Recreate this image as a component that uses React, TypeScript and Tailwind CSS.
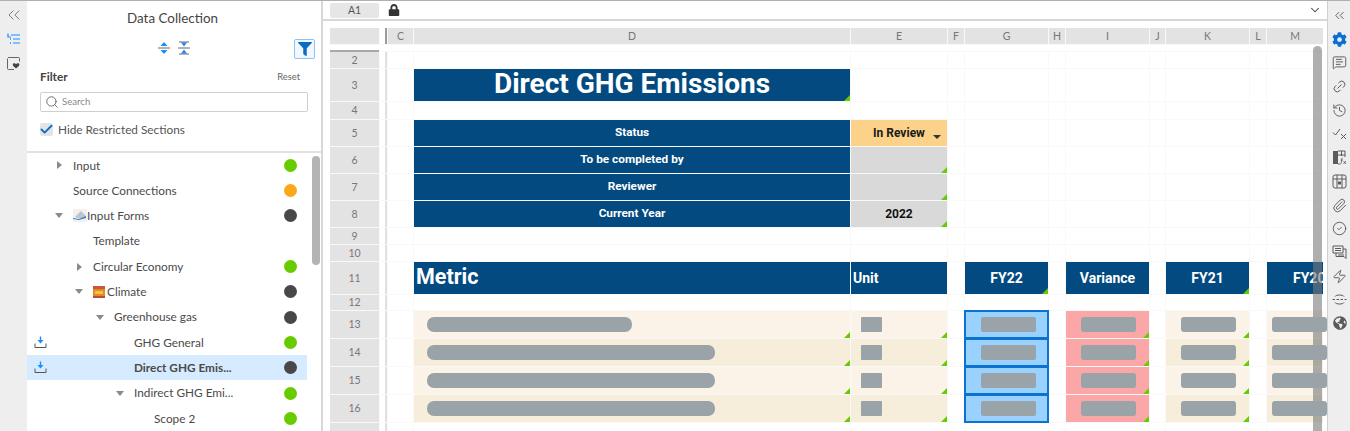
import { ChevronDown, ChevronsLeft, History, Link2, MessageSquareText, Paperclip, CircleCheck, Zap, Search, Check } from "lucide-react";
import { FaCog, FaFilter, FaGlobeAmericas, FaLock } from "react-icons/fa";

type Node = { label: string; level: number; caret?: "open" | "closed"; dot?: string; emoji?: "mail" | "fire"; upload?: boolean; active?: boolean };

const GREEN = "bg-[#66cc00]";
const ORANGE = "bg-[#faa81a]";
const DARK = "bg-[#484848]";

const tree: Node[] = [
    { label: "Input", level: 0, caret: "closed", dot: GREEN },
    { label: "Source Connections", level: 0, dot: ORANGE },
    { label: "Input Forms", level: 0, caret: "open", dot: DARK, emoji: "mail" },
    { label: "Template", level: 1 },
    { label: "Circular Economy", level: 1, caret: "closed", dot: GREEN },
    { label: "Climate", level: 1, caret: "open", dot: DARK, emoji: "fire" },
    { label: "Greenhouse gas", level: 2, caret: "open", dot: DARK },
    { label: "GHG General", level: 3, dot: GREEN, upload: true },
    { label: "Direct GHG Emis...", level: 3, dot: DARK, upload: true, active: true },
    { label: "Indirect GHG Emi...", level: 3, caret: "open", dot: GREEN },
    { label: "Scope 2", level: 4, dot: GREEN },
];

const indents = ["ml-0", "ml-[20px]", "ml-[41px]", "ml-[61px]", "ml-[81px]"];

function UploadIcon() {
    return (
        <svg width="13" height="13" viewBox="0 0 13 13" fill="none">
            <path d="M1 7.5v4h11v-4" stroke="#555" strokeWidth="1" />
            <path d="M6.5 0.5v4" stroke="#1a8cff" strokeWidth="1.4" />
            <path d="M3.5 4h6l-3 3.5z" fill="#1a8cff" />
        </svg>
    );
}

function MailEmoji() {
    return (
        <svg width="14" height="13" viewBox="0 0 14 13" className="shrink-0">
            <rect x="0" y="0" width="14" height="13" fill="#f0f0f0" />
            <path d="M2 8l6-6 5 5-5 3z" fill="#bcc4cc" />
            <path d="M0 9l6 1 7-3v2l-7 2-6-1z" fill="#3a87c4" />
        </svg>
    );
}

function FireEmoji() {
    return (
        <svg width="12" height="12" viewBox="0 0 12 12" className="mr-[2px] shrink-0">
            <rect width="12" height="12" fill="#e08a30" />
            <rect y="0" width="12" height="3" fill="#c8553f" />
            <rect x="2" y="5" width="8" height="3" fill="#f7c331" />
            <rect y="10" width="12" height="2" fill="#c14b3a" />
        </svg>
    );
}

function TreeRow({ node }: { node: Node }) {
    return (
        <div className={`flex h-[25.3px] w-[280px] items-center text-[11.8px] text-[#4a4a4a] ${node.active ? "bg-[#d6ebff] font-bold" : ""}`}>
            <div className="flex w-[25px] shrink-0 pl-[7px]">{node.upload && <UploadIcon />}</div>
            <div className={`flex w-[21px] shrink-0 items-center pl-[3px] ${indents[node.level]}`}>
                {node.caret === "closed" && <div className="ml-[2px] h-0 w-0 border-y-[4px] border-l-[5px] border-y-transparent border-l-[#8a8a8a]" />}
                {node.caret === "open" && <div className="h-0 w-0 border-x-[4.5px] border-t-[5px] border-x-transparent border-t-[#8a8a8a]" />}
            </div>
            {node.emoji === "mail" && <MailEmoji />}
            {node.emoji === "fire" && <FireEmoji />}
            <span className="whitespace-nowrap">{node.label}</span>
            {node.dot && <div className={`ml-auto mr-[10px] h-[13px] w-[13px] shrink-0 rounded-full ${node.dot}`} />}
        </div>
    );
}

function LeftRail() {
    return (
        <div className="flex w-[27px] shrink-0 flex-col items-center bg-[#eeeeee] pt-[4px] text-[#666]">
            <ChevronsLeft size={20} strokeWidth={1} />
            <svg width="14" height="12" viewBox="0 0 14 12" fill="none" className="mt-[8px]" stroke="#1a8cff" strokeWidth="1.2">
                <path d="M1 0.5v3.5h3" />
                <path d="M4 2h9M6 6h7M6 10h7" />
                <path d="M3 6h1M3 10h1" strokeWidth="1.6" />
            </svg>
            <svg width="13" height="13" viewBox="0 0 13 13" fill="none" className="mt-[12px]">
                <path d="M1 0.500h10.500a1 1 0 0 1 1 1v3M7 12.500H1.500a1 1 0 0 1-1-1V1.500" stroke="#666" strokeWidth="1" />
                <path d="M9 11.500C7 10 5.800 9 5.800 7.600c0-1.500 2.400-1.900 3.200-.4.800-1.500 3.400-1.100 3.400.4 0 1.400-1.400 2.400-3.400 3.900z" fill="#444" />
            </svg>
        </div>
    );
}

function LeftPanel() {
    return (
        <div className="relative flex w-[296px] shrink-0 flex-col overflow-hidden border-r-2 border-[#d8d8d8] bg-white font-['Lato',sans-serif]">
            <div className="pt-[8px] pr-[3px] text-center text-[13.4px] leading-[18px] text-[#444]">Data Collection</div>
            <div className="flex h-[33px] items-center pl-[130px] pt-[9px]">
                <svg width="14" height="14" viewBox="0 0 14 14">
                    <path d="M7 1l3.500 4h-7zM7 13l-3.500-4h7z" fill="#1a8cff" />
                    <path d="M1 7h12" stroke="#666" strokeWidth="1" />
                </svg>
                <svg width="14" height="14" viewBox="0 0 14 14" className="ml-[6px]">
                    <path d="M7 5.500l-3-4h6zM7 8.500l3 4h-6z" fill="#1a8cff" />
                    <path d="M1 7h12M2 1h10M2 13h10" stroke="#666" strokeWidth="1" />
                </svg>
                <div className="ml-auto mr-[6px] mt-[3px] flex h-[20px] w-[21px] items-center justify-center rounded-[2px] border border-[#8cc4f5] bg-[#f2f8fe]">
                    <FaFilter className="text-[#0a6fc2]" size={14} />
                </div>
            </div>
            <div className="mt-[10px] flex items-center justify-between pl-[13px] pr-[21px]">
                <span className="text-[11.8px] font-bold leading-[16px] text-[#444]">Filter</span>
                <span className="text-[9.4px] leading-[16px] text-[#666]">Reset</span>
            </div>
            <div className="ml-[13px] mt-[7px] flex h-[20px] w-[268px] items-center rounded-[2px] border border-[#cfcfcf] pl-[4px]">
                <Search size={14} strokeWidth={1.4} className="text-[#555]" />
                <span className="ml-[3px] text-[9.6px] text-[#888]">Search</span>
            </div>
            <div className="ml-[13px] mt-[10px] flex items-center">
                <div className="flex h-[13px] w-[13px] items-center justify-center rounded-[2px] bg-[#e4e4e4]">
                    <Check size={15} strokeWidth={3} className="shrink-0 text-[#0a6fd0]" />
                </div>
                <span className="ml-[5px] text-[11.8px] leading-[16px] text-[#555]">Hide Restricted Sections</span>
            </div>
            <div className="mt-[13px] border-t-2 border-[#e2e2e2]">
                {tree.map((node) => (
                    <TreeRow key={node.label} node={node} />
                ))}
            </div>
            <div className="absolute right-[1px] top-[155px] h-[109px] w-[8px] rounded-full bg-[#b4b4b4]" />
        </div>
    );
}

function Corner() {
    return <div className="absolute bottom-0 right-0 h-0 w-0 border-b-[6px] border-l-[6px] border-b-[#66cc00] border-l-transparent" />;
}

const columns = ["C", "D", "E", "F", "G", "H", "I", "J", "K", "L", "M"];
const rows = [
    { n: 2, h: "h-[16px]" },
    { n: 3, h: "h-[32px]" },
    { n: 4, h: "h-[17px]" },
    { n: 5, h: "h-[26px]" },
    { n: 6, h: "h-[26px]" },
    { n: 7, h: "h-[26px]" },
    { n: 8, h: "h-[26px]" },
    { n: 9, h: "h-[16px]" },
    { n: 10, h: "h-[16px]" },
    { n: 11, h: "h-[32px]" },
    { n: 12, h: "h-[15px]" },
    { n: 13, h: "h-[27px]" },
    { n: 14, h: "h-[27px]" },
    { n: 15, h: "h-[27px]" },
    { n: 16, h: "h-[27px]" },
    { n: 17, h: "h-[27px]" },
];

const BLUE = "bg-[#024a80] text-white";
const CREAM = ["bg-[#fbf3e8]", "bg-[#f6eeda]"];

function Pill({ w, ml, round }: { w: string; ml: string; round: string }) {
    return <div className={`relative z-20 h-[15px] shrink-0 bg-[#99a3a8] ${w} ${ml} ${round}`} />;
}

function renderCell(row: number, col: string) {
    const key = `${row}${col}`;
    const base = "relative flex items-center leading-none";
    const band = row % 2 === 1 ? CREAM[0] : CREAM[1];

    if (row === 3 && col === "D") {
        return <div key={key} className={`${base} justify-center pb-[3px] text-[28px] font-bold ${BLUE}`}>Direct GHG Emissions<Corner /></div>;
    }
    if (row >= 5 && row <= 8 && col === "D") {
        const label = ["Status", "To be completed by", "Reviewer", "Current Year"][row - 5];
        return <div key={key} className={`${base} justify-center text-[11.8px] font-bold ${BLUE}`}>{label}</div>;
    }
    if (row === 5 && col === "E") {
        return (
            <div key={key} className={`${base} justify-center bg-[#fcd28a] text-[12px] font-bold text-[#1a1a1a]`}>
                In Review
                <div className="absolute bottom-[7px] right-[6px] h-0 w-0 border-x-[4px] border-t-[4px] border-x-transparent border-t-[#333]" />
            </div>
        );
    }
    if (row >= 6 && row <= 8 && col === "E") {
        return <div key={key} className={`${base} justify-center bg-[#d9d9d9] text-[12px] font-bold text-[#111]`}>{row === 8 && "2022"}<Corner /></div>;
    }
    if (row === 11) {
        if (col === "D") return <div key={key} className={`${base} pl-[2px] pb-[2px] text-[21.5px] font-bold ${BLUE}`}>Metric</div>;
        if (col === "E") return <div key={key} className={`${base} pl-[2px] pb-[1px] text-[14px] font-bold ${BLUE}`}>Unit</div>;
        if (col === "G") return <div key={key} className={`${base} justify-center pb-[1px] text-[14px] font-bold ${BLUE}`}>FY22<Corner /></div>;
        if (col === "I") return <div key={key} className={`${base} justify-center pb-[1px] text-[14px] font-bold ${BLUE}`}>Variance</div>;
        if (col === "K") return <div key={key} className={`${base} justify-center pb-[1px] text-[14px] font-bold ${BLUE}`}>FY21<Corner /></div>;
        if (col === "M") return <div key={key} className={`${base} overflow-hidden whitespace-nowrap pb-[1px] pl-[26px] text-[14px] font-bold ${BLUE}`}>FY20</div>;
    }
    if (row >= 13 && row <= 16) {
        if (col === "D") return <div key={key} className={`${base} ${band}`}><Pill ml="ml-[13px]" round="rounded-[7px]" w={row === 13 ? "w-[205px]" : "w-[288px]"} /><Corner /></div>;
        if (col === "E") return <div key={key} className={`${base} ${band}`}><Pill ml="ml-[10px]" round="rounded-[1px]" w="w-[21px]" /><Corner /></div>;
        if (col === "G") return <div key={key} className={`${base} z-10 bg-[#99d1ff] outline-2 -outline-offset-1 outline-[#0b72d2]`}><Pill ml="ml-[16px]" round="rounded-[2px]" w="w-[55px]" /></div>;
        if (col === "I") return <div key={key} className={`${base} bg-[#fba7a7]`}><Pill ml="ml-[15px]" round="rounded-[3px]" w="w-[55px]" /><Corner /></div>;
        if (col === "K") return <div key={key} className={`${base} ${band}`}><Pill ml="ml-[15px]" round="rounded-[3px]" w="w-[55px]" /><Corner /></div>;
        if (col === "M") return <div key={key} className={`${base} ${band}`}><Pill ml="ml-[5px]" round="rounded-[3px]" w="w-[55px]" /></div>;
    }
    return <div key={key} className="bg-white" />;
}

function Sheet() {
    return (
        <div className="ml-[7px] mt-[7px] grid w-max grid-cols-[49px_7px_25px_436px_96px_16px_83px_16px_83px_15px_83px_16px_56px] gap-px bg-[#f9f9f9] font-['Roboto',sans-serif]">
            <div className="h-[16px] bg-[#e3e3e3]" />
            <div className="border-r-2 border-[#9a9a9a] bg-white" />
            {columns.map((c) => (
                <div key={c} className="flex items-center justify-center bg-[#e3e3e3] font-['Lato',sans-serif] text-[10.5px] leading-none text-[#777]">{c}</div>
            ))}
            <div className="col-span-full h-[6px] bg-white">
                <div className="mt-[5px] h-[2px] w-[49px] bg-[#a8a8a8]" />
            </div>
            {rows.map(({ n, h }) => (
                <div key={n} className="contents">
                    <div className={`flex items-center justify-center bg-[#e3e3e3] font-['Lato',sans-serif] text-[10.5px] leading-none text-[#777] ${h}`}>{n}</div>
                    <div className="border-r-2 border-[#e0e0e0] bg-white" />
                    {columns.map((c) => renderCell(n, c))}
                </div>
            ))}
        </div>
    );
}

function RightRail() {
    const cls = "text-[#5a5a5a]";
    return (
        <div className="flex w-[24px] shrink-0 flex-col items-center gap-[8.7px] border-l border-[#d0d0d0] bg-[#eeeeee] pt-[7px]">
            <ChevronsLeft size={15} strokeWidth={1.5} className={cls} />
            <FaCog size={15} className="text-[#0a6fd0]" />
            <MessageSquareText size={15} strokeWidth={1.5} className={cls} />
            <Link2 size={15} strokeWidth={1.5} className={`${cls} -rotate-45`} />
            <History size={15} strokeWidth={1.5} className={cls} />
            <svg width="15" height="15" viewBox="0 0 15 15" fill="none" stroke="#5a5a5a" strokeWidth="1">
                <path d="M1 6.500l2.500 2.500L8 3" />
                <path d="M9 8l5 5M14 8l-5 5" />
            </svg>
            <svg width="15" height="15" viewBox="0 0 15 15" fill="none">
                <path d="M1 1h5v13H1z" fill="#5a5a5a" />
                <path d="M6 1h7v6M6 5h7M9.500 1v5M6 14h2" stroke="#5a5a5a" strokeWidth="1" />
                <path d="M10.500 8c-1 0-.8 1-1 3s-.2 3-1.200 3M8.500 10h2.500M11.500 11l2.500 3M14 11l-2.500 3" stroke="#5a5a5a" strokeWidth=".8" />
            </svg>
            <svg width="15" height="15" viewBox="0 0 15 15" fill="none" stroke="#5a5a5a" strokeWidth="1">
                <rect x="1" y="1" width="13" height="13" rx="2" />
                <path d="M1 5h13M5 1v4M10 1v4M5 5v9M10 5v9" />
                <rect x="6.500" y="8" width="2" height="2" fill="#5a5a5a" />
            </svg>
            <Paperclip size={15} strokeWidth={1.5} className={cls} />
            <CircleCheck size={15} strokeWidth={1.5} className={cls} />
            <svg width="15" height="15" viewBox="0 0 15 15" fill="none" stroke="#5a5a5a" strokeWidth="1">
                <path d="M1 1h10v7H1z" />
                <path d="M4 8v3.500h8l2 2V4h-3M3 3.500h6M3 5.500h6M6 10h6" />
            </svg>
            <Zap size={15} strokeWidth={1.5} className={cls} />
            <svg width="15" height="15" viewBox="0 0 15 15" fill="none" stroke="#5a5a5a" strokeWidth="1">
                <path d="M3 4.500c1-2 8-2 9 0M3 10.500c1 2 8 2 9 0" />
                <path d="M0.500 7.500h14" strokeDasharray="2.500 1.500" />
            </svg>
            <FaGlobeAmericas size={14} className={cls} />
        </div>
    );
}

export default function App() {
    return (
        <div className="flex h-[431px] w-[1350px] overflow-hidden border-t border-[#b0b0b0] bg-white">
            <LeftRail />
            <LeftPanel />
            <div className="relative flex w-[1004px] shrink-0 flex-col overflow-hidden bg-white">
                <div className="flex h-[20px] shrink-0 items-center border-b-2 border-[#d8d8d8] pl-[7px] pr-[5px]">
                    <div className="flex h-[15px] w-[49px] items-center justify-center rounded-[2px] bg-[#e6e6e6] font-['Lato',sans-serif] text-[10.5px] leading-none text-[#555]">A1</div>
                    <FaLock size={12} className="ml-[9px] text-[#333]" />
                    <ChevronDown size={14} strokeWidth={1.8} className="ml-auto text-[#444]" />
                </div>
                <Sheet />
                <div className="absolute right-[5px] top-[45px] z-10 h-[400px] w-[9px] rounded-t-full bg-[#7a7a7a]/60" />
            </div>
            <RightRail />
        </div>
    );
}
